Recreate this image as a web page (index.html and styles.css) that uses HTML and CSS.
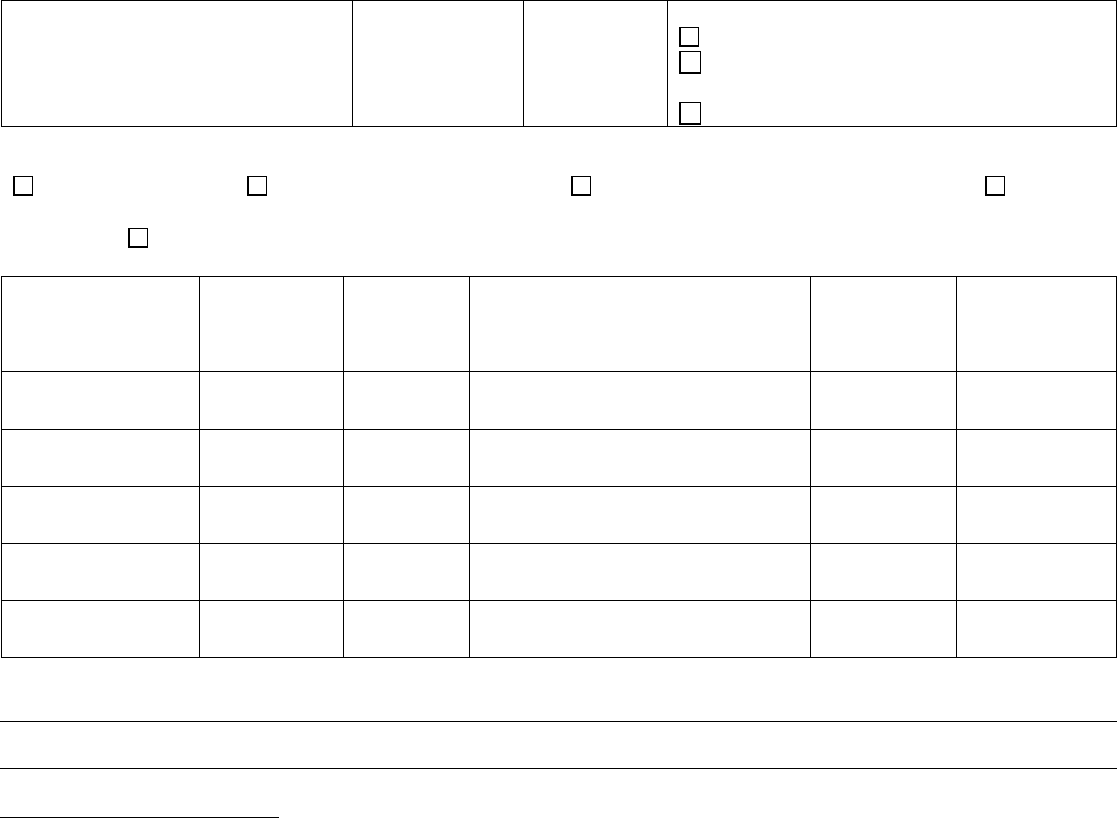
FILE: index.html
```html
<!DOCTYPE html>
<html lang="en">
<head>
<meta charset="utf-8">
<title>Form</title>
<link rel="stylesheet" href="styles.css">
</head>
<body>
<div class="page">
  <div class="top-grid">
    <div class="tcell"></div>
    <div class="tcell"></div>
    <div class="tcell"></div>
    <div class="tcell choices">
      <span class="box box-a"></span>
      <span class="box box-b"></span>
      <span class="box box-c"></span>
    </div>
  </div>

  <div class="options">
    <div class="opt-row row1">
      <span class="box o1"></span>
      <span class="box o2"></span>
      <span class="box o3"></span>
      <span class="box o4"></span>
    </div>
    <div class="opt-row row2">
      <span class="box o5"></span>
    </div>
  </div>

  <div class="data-grid">
    <div class="cell head"></div><div class="cell head"></div><div class="cell head"></div><div class="cell head"></div><div class="cell head"></div><div class="cell head"></div>
    <div class="cell r1"></div><div class="cell r1"></div><div class="cell r1"></div><div class="cell r1"></div><div class="cell r1"></div><div class="cell r1"></div>
    <div class="cell"></div><div class="cell"></div><div class="cell"></div><div class="cell"></div><div class="cell"></div><div class="cell"></div>
    <div class="cell"></div><div class="cell"></div><div class="cell"></div><div class="cell"></div><div class="cell"></div><div class="cell"></div>
    <div class="cell"></div><div class="cell"></div><div class="cell"></div><div class="cell"></div><div class="cell"></div><div class="cell"></div>
    <div class="cell"></div><div class="cell"></div><div class="cell"></div><div class="cell"></div><div class="cell"></div><div class="cell"></div>
  </div>

  <div class="rule rule1"></div>
  <div class="rule rule2"></div>
  <div class="rule rule3"></div>
</div>
</body>
</html>
```

FILE: styles.css
```css
* { box-sizing: border-box; }
html, body { margin: 0; padding: 0; background: #fff; }
body { font-family: "Liberation Sans", Arial, sans-serif; color: #000; }

.page { width: 1118px; }

.top-grid {
  margin-left: 1px;
  width: 1116px;
  height: 127px;
  border: 1px solid #000;
  display: grid;
  grid-template-columns: 350px 171px 144px 1fr;
}
.tcell { border-left: 1px solid #000; }
.tcell:first-child { border-left: none; }

.choices {
  display: flex;
  flex-direction: column;
  align-items: flex-start;
  padding-left: 11px;
  padding-top: 26px;
}

.box {
  display: block;
  flex: none;
  width: 20px;
  height: 20px;
  border: 1px solid #000;
  border-left-width: 2px;
  border-bottom-width: 2px;
  background: #fff;
}
.box-b, .box-c { width: 22px; height: 23px; }
.box-b { margin-top: 4px; }
.box-c { margin-top: 28px; }

.options { padding-top: 49px; }
.opt-row { display: flex; }
.o1 { margin-left: 13px; }
.o2 { margin-left: 214px; }
.o3 { margin-left: 304px; }
.o4 { margin-left: 394px; }
.row2 { margin-top: 32px; }
.o5 { margin-left: 128px; }

.data-grid {
  margin-top: 28px;
  margin-left: 1px;
  width: 1116px;
  border-top: 1px solid #000;
  border-left: 1px solid #000;
  display: grid;
  grid-template-columns: 198px 144px 126px 341px 146px 160px;
  grid-auto-rows: 57px;
}
.cell {
  border-right: 1px solid #000;
  border-bottom: 1px solid #000;
}
.cell.head { height: 95px; }
.data-grid { grid-template-rows: 95px 58px; }

.rule { height: 1px; background: #000; }
.rule1 { width: 1117px; margin-top: 63px; }
.rule2 { width: 1117px; margin-top: 46px; }
.rule3 { width: 279px; margin-top: 48px; }
```
